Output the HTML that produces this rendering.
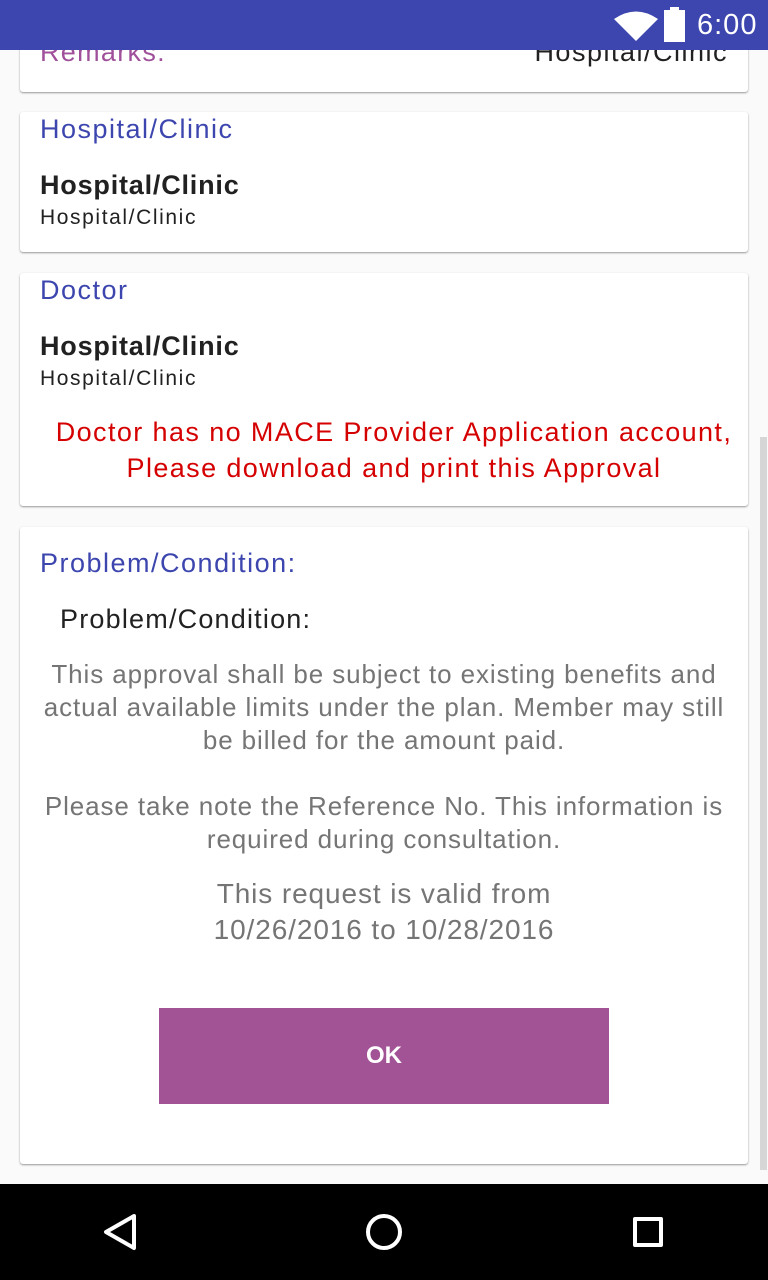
<!DOCTYPE html>
<html><head><meta charset="utf-8"><style>
*{margin:0;padding:0;box-sizing:border-box}
body{width:768px;height:1280px;background:#fafafa;font-family:"Liberation Sans",Roboto,sans-serif;position:relative;overflow:hidden}
.card{position:absolute;left:20px;width:728px;background:#fff;border-radius:3px;box-shadow:0 1px 2px rgba(0,0,0,.3),0 1px 1px rgba(0,0,0,.12)}
.t{position:absolute;white-space:nowrap}
.blue{color:#3c46ae;font-size:27px;letter-spacing:1.5px}
.bold{font-weight:bold;font-size:27px;color:#212121;letter-spacing:0.8px}
.sm{font-size:21px;color:#212121;letter-spacing:1.6px}
.red{color:#d50000;font-size:27px;text-align:center;width:728px;left:0;line-height:36px;letter-spacing:1.4px}
.gray{color:#757575;font-size:26px;text-align:center;width:728px;left:0;line-height:33px;letter-spacing:0.9px}
</style></head><body>
<div class="card" style="top:0;height:92px">
<div class="t" style="left:20px;top:37px;font-size:27px;color:#a0509a;letter-spacing:1.3px">Remarks:</div>
<div class="t" style="right:20px;top:37px;font-size:27px;color:#212121;letter-spacing:1.5px">Hospital/Clinic</div>
</div>
<div class="card" style="top:112px;height:140px">
<div class="t blue" style="left:20px;top:2px">Hospital/Clinic</div>
<div class="t bold" style="left:20px;top:58px">Hospital/Clinic</div>
<div class="t sm" style="left:20px;top:94px">Hospital/Clinic</div>
</div>
<div class="card" style="top:273px;height:233px">
<div class="t blue" style="left:20px;top:2px">Doctor</div>
<div class="t bold" style="left:20px;top:58px">Hospital/Clinic</div>
<div class="t sm" style="left:20px;top:94px">Hospital/Clinic</div>
<div class="t red" style="top:141px;left:10px">Doctor has no MACE Provider Application account,<br>Please download and print this Approval</div>
</div>
<div class="card" style="top:527px;height:637px">
<div class="t blue" style="left:20px;top:21px">Problem/Condition:</div>
<div class="t" style="left:40px;top:77px;font-size:27px;color:#212121;letter-spacing:1.2px">Problem/Condition:</div>
<div class="t gray" style="top:131px">This approval shall be subject to existing benefits and<br>actual available limits under the plan. Member may still<br>be billed for the amount paid.</div>
<div class="t gray" style="top:263px">Please take note the Reference No. This information is<br>required during consultation.</div>
<div class="t gray" style="top:349px;font-size:28px;line-height:36px">This request is valid from<br>10/26/2016 to 10/28/2016</div>
<div style="position:absolute;left:139px;top:481px;width:450px;height:96px;background:#a25396;color:#fff;font-size:24px;font-weight:bold;text-align:center;line-height:96px">OK</div>
</div>
<div style="position:absolute;left:760px;top:437px;width:7px;height:733px;background:#d6d6d6"></div>
<div style="position:absolute;left:0;top:0;width:768px;height:50px;background:#3c46ae">
<svg style="position:absolute;left:614px;top:10px" width="44" height="32" viewBox="0 0 44 32"><path d="M0 9 Q22 -6 44 9 L22 31 Z" fill="#fff"/></svg>
<div style="position:absolute;left:664px;top:10px;width:21px;height:32px;background:#fff"></div>
<div style="position:absolute;left:670px;top:7px;width:9px;height:4px;background:#fff"></div>
<div class="t" style="left:697px;top:9px;color:#fff;font-size:29px;letter-spacing:1px">6:00</div>
</div>
<div style="position:absolute;left:0;top:1184px;width:768px;height:96px;background:#000">
<svg style="position:absolute;left:100px;top:28px" width="40" height="40" viewBox="0 0 40 40"><path d="M34 4 L6 20 L34 36 Z" fill="none" stroke="#fff" stroke-width="4" stroke-linejoin="round"/></svg>
<svg style="position:absolute;left:364px;top:28px" width="40" height="40" viewBox="0 0 40 40"><circle cx="20" cy="20" r="16" fill="none" stroke="#fff" stroke-width="4"/></svg>
<div style="position:absolute;left:633px;top:33px;width:30px;height:30px;border:4px solid #fff;border-radius:2px"></div>
</div>
</body></html>
